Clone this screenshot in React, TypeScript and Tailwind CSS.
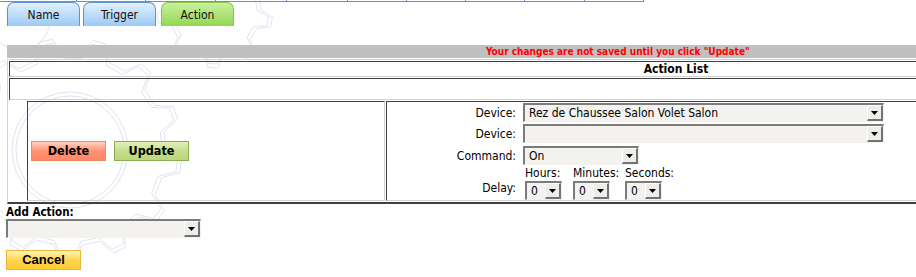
import React from 'react';

const segs = [77, 69, 70, 71, 61, 59, 59, 59, 60, 59];

function gearPath(cx: number, cy: number, r1: number, r2: number, n: number) {
  const pts: string[] = [];
  const s = (Math.PI * 2) / n;
  for (let i = 0; i < n; i++) {
    const a = i * s;
    const at = (r: number, t: number) => `${(cx + r * Math.cos(t)).toFixed(1)},${(cy + r * Math.sin(t)).toFixed(1)}`;
    pts.push(at(r1, a), at(r2, a + s * 0.18), at(r2, a + s * 0.42), at(r1, a + s * 0.6));
  }
  return 'M' + pts.join('L') + 'Z';
}

const Watermark = () => (
  <svg className="absolute left-0 top-0 pointer-events-none" width="320" height="277" viewBox="0 0 320 277">
    <g fill="none" stroke="#e2e2f2" strokeWidth="1">
      <path d={gearPath(70, 150, 96, 112, 13)} />
      <path d={gearPath(70, 150, 92, 108, 13)} />
      <circle cx="70" cy="150" r="58" />
      <circle cx="70" cy="150" r="54" />
      <path d={gearPath(215, 10, 46, 58, 9)} />
      <path d={gearPath(215, 10, 42, 54, 9)} />
      <circle cx="20" cy="20" r="30" />
    </g>
  </svg>
);

const Select = ({ value, w }: { value?: string; w: string }) => (
  <div className={`${w} h-[19px] flex bg-[#f3f2ee] border-t-2 border-l-2 border-t-[#7b7b7b] border-l-[#7b7b7b] border-r border-b border-r-[#f3f2ee] border-b-[#f3f2ee]`}>
    <span className="flex-1 pl-[4px] text-[12px] leading-[16px] text-black whitespace-nowrap overflow-hidden">{value}</span>
    <span className="w-[16px] h-[16px] flex items-center justify-center bg-[#eeede9] border-t border-l border-t-white border-l-white border-r-2 border-b-2 border-r-[#737373] border-b-[#737373]">
      <svg width="7" height="4" viewBox="0 0 7 4">
        <path d="M0 0H7L3.5 4Z" fill="#000" />
      </svg>
    </span>
  </div>
);

const Tab = ({ label, active, cls }: { label: string; active?: boolean; cls: string }) => (
  <div
    className={`${cls} w-[73px] h-[24px] rounded-t-[7px] border border-b-0 flex items-center justify-center text-[12px] text-[#111] ${
      active
        ? 'bg-gradient-to-b from-[#c9f09c] to-[#92d650] border-[#86c84a]'
        : 'bg-gradient-to-b from-[#e2f0fd] to-[#9cc9f4] border-[#5b95d8]'
    }`}
  >
    {label}
  </div>
);

export default function App() {
  return (
    <div className="relative w-[916px] h-[277px] overflow-hidden bg-white font-['DejaVu_Sans_Condensed','DejaVu_Sans',sans-serif]">
      <Watermark />
      <div className="relative">
        {/* menu strip */}
        <div className="flex h-[2px]">
          {segs.map((w, i) => (
            <div key={i} style={{ width: w }} className="h-[2px] border-b border-r border-[#5b95d8]" />
          ))}
        </div>

        {/* tabs */}
        <div className="flex pl-[7px]">
          <Tab label="Name" cls="" />
          <Tab label="Trigger" cls="ml-[3px]" />
          <Tab label="Action" active cls="ml-[5px]" />
        </div>

        {/* warning bar */}
        <div className="ml-[7px] mt-[19px] h-[13px] bg-[#c0c0c0] pl-[479px] text-[10px] leading-[13px] font-bold text-[#f00] whitespace-nowrap">
          Your changes are not saved until you click "Update"
        </div>

        {/* action list table */}
        <div className="ml-[7px] mt-[1px] w-[1336px] flex flex-col gap-[1px] pt-[1px] pb-[1px] border-t border-l border-[#d2d2d2] border-b-2 border-b-[#404040]">
          <div className="h-[16px] ml-[1px] border border-t-[#404040] border-l-[#404040] border-r-[#d2d2d2] border-b-[#d2d2d2] text-center text-[12px] leading-[14px] font-bold text-black">
            Action List
          </div>
          <div className="h-[22px] ml-[1px] border border-t-[#404040] border-l-[#404040] border-r-[#d2d2d2] border-b-[#d2d2d2]" />
          <div className="flex h-[100px] ml-[19px] gap-[1px]">
            <div className="w-[358px] flex items-center gap-[8px] pl-[3px] border border-t-[#404040] border-l-[#404040] border-r-[#d2d2d2] border-b-[#d2d2d2]">
              <button className="w-[75px] h-[20px] border border-[#ec8a62] bg-gradient-to-b from-[#ffd2bf] via-[#ff9274] to-[#ff8866] font-bold text-[12.5px] leading-[18px] text-black">
                Delete
              </button>
              <button className="w-[75px] h-[20px] border border-[#8cab50] bg-gradient-to-b from-[#e2f0b8] via-[#c6de8a] to-[#bcd67c] font-bold text-[12.5px] leading-[18px] text-black">
                Update
              </button>
            </div>
            <div className="flex-1 flex flex-col pt-[1px] border border-t-[#404040] border-l-[#404040] border-r-[#d2d2d2] border-b-[#d2d2d2] text-[12px] text-black">
              <div className="flex items-center h-[19px]">
                <span className="w-[129px] text-right">Device:</span>
                <div className="ml-[7px]"><Select w="w-[361px]" value="Rez de Chaussee Salon Volet Salon" /></div>
              </div>
              <div className="flex items-center h-[19px] mt-[2px]">
                <span className="w-[129px] text-right">Device:</span>
                <div className="ml-[7px]"><Select w="w-[361px]" /></div>
              </div>
              <div className="flex items-center h-[19px] mt-[3px]">
                <span className="w-[129px] text-right">Command:</span>
                <div className="ml-[7px]"><Select w="w-[116px]" value="On" /></div>
              </div>
              <div className="flex items-center mt-[1px]">
                <span className="w-[129px] text-right pt-[9px]">Delay:</span>
                <div className="ml-[9px] flex">
                  <div className="w-[48px] flex flex-col">
                    <span className="leading-[15px]">Hours:</span>
                    <Select w="w-[37px]" value="0" />
                  </div>
                  <div className="w-[52px] flex flex-col">
                    <span className="leading-[15px]">Minutes:</span>
                    <Select w="w-[37px]" value="0" />
                  </div>
                  <div className="flex flex-col">
                    <span className="leading-[15px]">Seconds:</span>
                    <Select w="w-[37px]" value="0" />
                  </div>
                </div>
              </div>
            </div>
          </div>
        </div>

        {/* add action */}
        <div className="ml-[6px] mt-[1px]">
          <div className="text-[11.5px] leading-[14px] font-bold text-black">Add Action:</div>
          <Select w="w-[195px]" />
          <button className="mt-[12px] w-[75px] h-[20px] border border-[#efb43a] bg-gradient-to-b from-[#fff3b0] via-[#ffd652] to-[#ffca30] font-['Liberation_Sans',sans-serif] font-bold text-[13px] leading-[18px] text-black">
            Cancel
          </button>
        </div>
      </div>
    </div>
  );
}
